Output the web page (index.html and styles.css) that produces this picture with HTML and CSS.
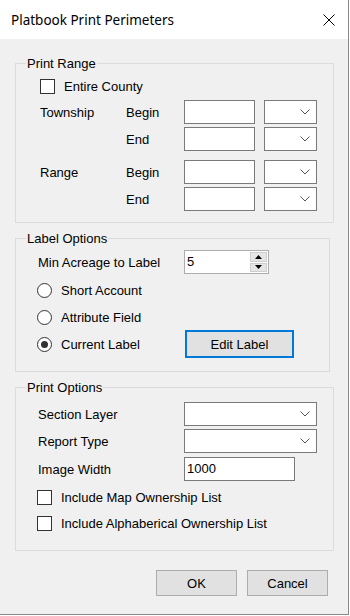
FILE: index.html
```html
<!DOCTYPE html>
<html lang="en">
<head>
    <meta charset="UTF-8">
    <meta name="viewport" content="width=device-width, initial-scale=1.0">
    <title>Platbook Print Perimeters</title>
    <link rel="stylesheet" href="styles.css">
</head>
<body>
    <div class="window">
        <div class="titlebar">
            <span class="title">Platbook Print Perimeters</span>
            <svg class="close" width="12" height="12" viewBox="0 0 12 12">
                <path d="M0.5 0.5 L11.5 11.5 M11.5 0.5 L0.5 11.5" stroke="#000" stroke-width="1" fill="none"/>
            </svg>
        </div>

        <div class="content">
            <fieldset class="group wide">
                <legend>Print Range</legend>
                <div class="range-body">
                    <label class="check"><span class="box"></span>Entire County</label>

                    <div class="range-block first">
                        <span>Township</span><span>Begin</span>
                        <div class="textbox"></div>
                        <div class="combo"><svg width="10" height="6" viewBox="0 0 10 6"><polyline points="0.5,0.5 5,5 9.5,0.5" fill="none" stroke="#555"/></svg></div>
                        <span></span><span>End</span>
                        <div class="textbox"></div>
                        <div class="combo"><svg width="10" height="6" viewBox="0 0 10 6"><polyline points="0.5,0.5 5,5 9.5,0.5" fill="none" stroke="#555"/></svg></div>
                    </div>

                    <div class="range-block">
                        <span>Range</span><span>Begin</span>
                        <div class="textbox"></div>
                        <div class="combo"><svg width="10" height="6" viewBox="0 0 10 6"><polyline points="0.5,0.5 5,5 9.5,0.5" fill="none" stroke="#555"/></svg></div>
                        <span></span><span>End</span>
                        <div class="textbox"></div>
                        <div class="combo"><svg width="10" height="6" viewBox="0 0 10 6"><polyline points="0.5,0.5 5,5 9.5,0.5" fill="none" stroke="#555"/></svg></div>
                    </div>
                </div>
            </fieldset>

            <fieldset class="group narrow">
                <legend>Label Options</legend>
                <div class="options-body">
                    <div class="field-row">
                        <span>Min Acreage to Label</span>
                        <div class="spin">
                            <span class="spin-value">5</span>
                            <div class="spin-buttons">
                                <span class="spin-btn"><svg width="7" height="4" viewBox="0 0 7 4"><polygon points="3.5,0 7,4 0,4" fill="#000"/></svg></span>
                                <span class="spin-btn"><svg width="7" height="4" viewBox="0 0 7 4"><polygon points="0,0 7,0 3.5,4" fill="#000"/></svg></span>
                            </div>
                        </div>
                    </div>
                    <label class="radio-row first"><span class="radio"></span>Short Account</label>
                    <label class="radio-row second"><span class="radio"></span>Attribute Field</label>
                    <div class="radio-row last">
                        <label class="radio-label"><span class="radio checked"></span>Current Label</label>
                        <button class="btn edit">Edit Label</button>
                    </div>
                </div>
            </fieldset>

            <fieldset class="group wide">
                <legend>Print Options</legend>
                <div class="print-body">
                    <div class="field-row top">
                        <span>Section Layer</span>
                        <div class="combo long"><svg width="10" height="6" viewBox="0 0 10 6"><polyline points="0.5,0.5 5,5 9.5,0.5" fill="none" stroke="#555"/></svg></div>
                    </div>
                    <div class="field-row next">
                        <span>Report Type</span>
                        <div class="combo long"><svg width="10" height="6" viewBox="0 0 10 6"><polyline points="0.5,0.5 5,5 9.5,0.5" fill="none" stroke="#555"/></svg></div>
                    </div>
                    <div class="field-row next2">
                        <span>Image Width</span>
                        <div class="textbox medium">1000</div>
                    </div>
                    <label class="check list first"><span class="box"></span>Include Map Ownership List</label>
                    <label class="check list second"><span class="box"></span>Include Alphaberical Ownership List</label>
                </div>
            </fieldset>

            <div class="footer">
                <button class="btn">OK</button>
                <button class="btn">Cancel</button>
            </div>
        </div>
    </div>
</body>
</html>
```

FILE: styles.css
```css
body {
    margin: 0;
    background: #fff;
    font-family: "Liberation Sans", Arial, sans-serif;
    font-size: 13px;
    color: #000;
}
.window {
    width: 349px;
    height: 615px;
    box-sizing: border-box;
    border-right: 1px solid #8a8a8a;
    border-bottom: 1px solid #8a8a8a;
    background: #f0f0f0;
}
.titlebar {
    height: 39px;
    background: #fff;
    display: flex;
    align-items: center;
    justify-content: space-between;
    padding: 0 13px 0 11px;
}
.title {
    font-family: "Noto Sans", sans-serif;
    font-size: 13.5px;
}
.content {
    padding: 17px 0 0 15px;
}

/* group boxes */
.group {
    margin: 0;
    padding: 0 0 11px 0;
    border: 1px solid #dcdcdc;
    box-sizing: border-box;
    min-width: 0;
}
.group.wide {
    width: 319px;
}
.group.narrow {
    width: 315px;
    margin-top: 8px;
    padding-bottom: 13px;
}
.group.wide + .group.narrow + .group.wide {
    margin-top: 8px;
    padding-bottom: 18px;
}
.group legend {
    margin-left: 10px;
    padding: 0 1px;
    line-height: 15px;
}

/* checkboxes and radios */
.check {
    display: flex;
    align-items: center;
    height: 17px;
    gap: 9px;
}
.box {
    width: 15px;
    height: 15px;
    box-sizing: border-box;
    border: 1px solid #333;
    background: #fff;
}
.radio {
    width: 15px;
    height: 15px;
    box-sizing: border-box;
    border: 1px solid #333;
    border-radius: 50%;
    background: #fff;
    display: flex;
    align-items: center;
    justify-content: center;
}
.radio.checked::after {
    content: "";
    width: 7px;
    height: 7px;
    border-radius: 50%;
    background: #333;
}

/* inputs */
.textbox, .combo {
    height: 24px;
    box-sizing: border-box;
    background: #fff;
    border: 1px solid #7a7a7a;
}
.textbox {
    width: 71px;
    padding-left: 2px;
    line-height: 22px;
}
.textbox.medium {
    width: 111px;
}
.combo {
    width: 53px;
    display: flex;
    align-items: center;
    justify-content: flex-end;
    padding-right: 6px;
}
.combo.long {
    width: 133px;
}

/* print range */
.range-body {
    padding: 7px 0 0 24px;
}
.range-block {
    display: grid;
    grid-template-columns: 77px 49px 71px 53px;
    grid-template-rows: 24px 24px;
    column-gap: 9px;
    row-gap: 3px;
    align-items: center;
    margin-top: 9px;
}
.range-block.first {
    margin-top: 5px;
}

/* label options */
.options-body {
    padding: 4px 0 0 22px;
}
.field-row {
    display: grid;
    grid-template-columns: 146px auto;
    align-items: center;
    justify-items: start;
}
.spin {
    width: 85px;
    height: 24px;
    box-sizing: border-box;
    border: 1px solid #adadad;
    background: #fff;
    display: flex;
    justify-content: space-between;
}
.spin-value {
    padding-left: 2px;
    line-height: 22px;
}
.spin-buttons {
    width: 18px;
    display: flex;
    flex-direction: column;
    gap: 1px;
    padding: 1px 1px 1px 0;
    box-sizing: border-box;
}
.spin-btn {
    flex: 1;
    background: #e5e5e5;
    border: 1px solid #cfcfcf;
    display: flex;
    align-items: center;
    justify-content: center;
}
.radio-row {
    display: flex;
    align-items: center;
    gap: 9px;
    height: 17px;
    margin-left: -1px;
}
.radio-row.first {
    margin-top: 8px;
}
.radio-row.second {
    margin-top: 10px;
}
.radio-row.last {
    margin-top: 4px;
    height: 28px;
    gap: 0;
}
.radio-label {
    display: flex;
    align-items: center;
    gap: 9px;
    width: 148px;
}

/* buttons */
.btn {
    font: inherit;
    color: #000;
    width: 81px;
    height: 26px;
    background: #e1e1e1;
    border: 1px solid #adadad;
    padding: 0;
}
.btn.edit {
    width: 109px;
    height: 28px;
    border: 2px solid #0078d7;
}

/* print options */
.print-body {
    padding: 7px 0 0 22px;
}
.field-row.next {
    margin-top: 3px;
}
.field-row.next2 {
    margin-top: 4px;
}
.check.list {
    margin-left: -1px;
    margin-top: 8px;
}
.check.list.second {
    margin-top: 9px;
}

.footer {
    display: flex;
    justify-content: flex-end;
    gap: 10px;
    padding-right: 20px;
    margin-top: 19px;
}
```
